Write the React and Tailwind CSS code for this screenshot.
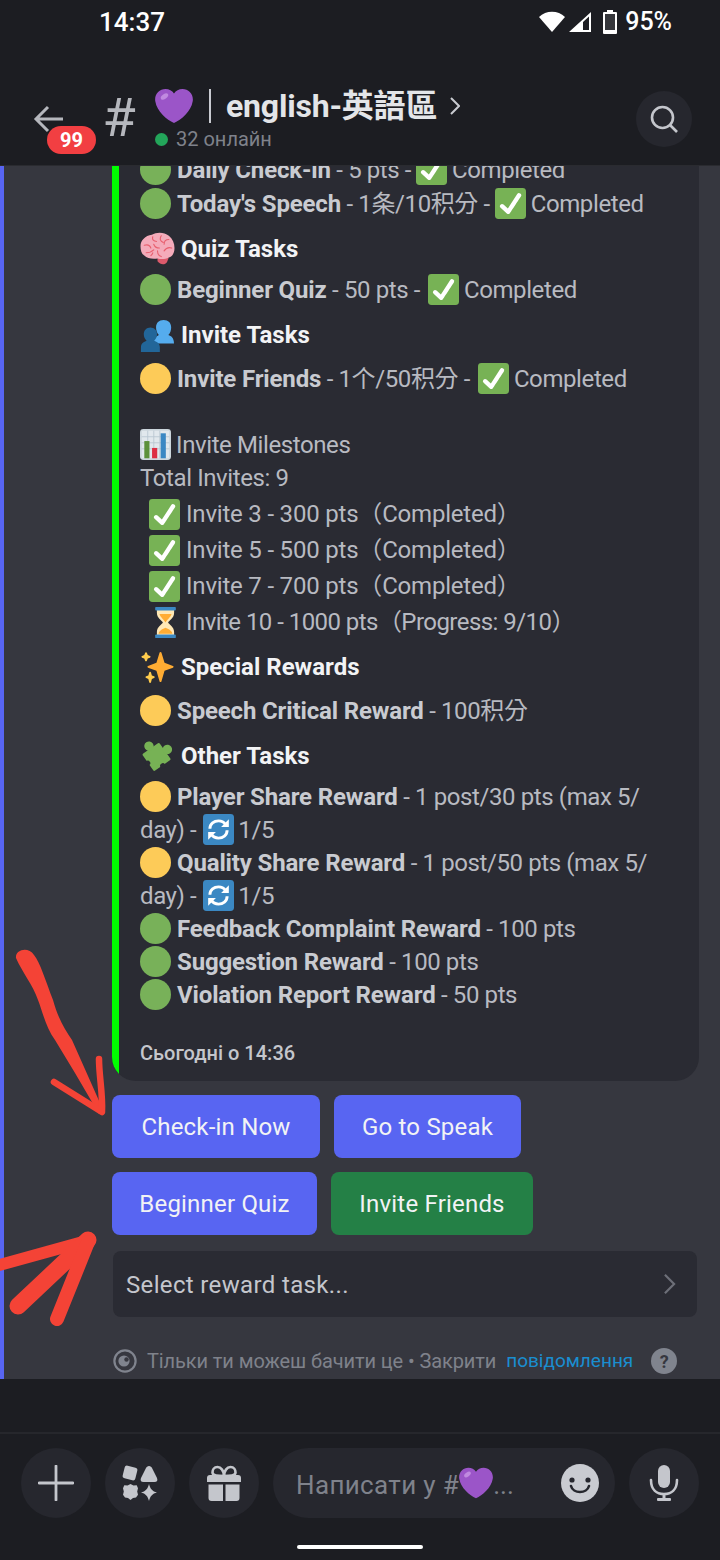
const FONT = "font-['Roboto','Noto_Sans_CJK_TC',sans-serif]";

function Circle({ color }) {
  return (
    <svg viewBox="0 0 36 36" className="h-[31px] w-[31px] shrink-0 mr-[6px]">
      <circle cx="18" cy="18" r="18" fill={color} />
    </svg>
  );
}

const GreenDot = () => <Circle color="#78b159" />;
const YellowDot = () => <Circle color="#fdcb58" />;

function Check({ className = "mx-[5px]" }) {
  return (
    <svg viewBox="0 0 36 36" className={`h-[31px] w-[31px] shrink-0 ${className}`}>
      <rect width="36" height="36" rx="4" fill="#77b255" />
      <path
        fill="#fff"
        d="M29.28 6.362a2.5 2.5 0 0 0-3.458.736L14.936 23.877l-5.029-4.65a2.5 2.5 0 0 0-3.394 3.671l7.209 6.666c.48.445 1.09.665 1.696.665.673 0 1.534-.282 2.099-1.139.332-.506 12.5-19.27 12.5-19.27a2.5 2.5 0 0 0-.737-3.458z"
      />
    </svg>
  );
}

function Heart({ className }) {
  return (
    <svg viewBox="0 0 36 36" className={className}>
      <path
        fill="#9b55c8"
        d="M35.885 11.833c0-5.45-4.418-9.868-9.867-9.868-3.308 0-6.227 1.633-8.018 4.129-1.791-2.496-4.71-4.129-8.017-4.129-5.45 0-9.868 4.417-9.868 9.868 0 .772.098 1.52.266 2.241C1.751 22.587 11.216 31.568 18 34.034c6.783-2.466 16.249-11.447 17.617-19.959.17-.721.268-1.469.268-2.242z"
      />
      <ellipse cx="9" cy="9" rx="4" ry="2.2" fill="#c08ae0" transform="rotate(-35 9 9)" />
    </svg>
  );
}

function Brain() {
  return (
    <svg viewBox="0 0 36 36" className="h-[34px] w-[35px] shrink-0 mr-[6px]">
      <path fill="#dd5a6c" d="M18 27h12l-2 5c-2 3-7 3-10-1z" />
      <path
        fill="#f4abba"
        d="M12 3c5-3 13-3 18 1 4 3 6 8 6 13 0 5-2 9-6 10-4 2-8 2-12 1-5 1-11 0-14-3-3-2-4-6-4-10 0-6 5-11 12-12z"
      />
      <path
        fill="none"
        stroke="#e8606f"
        strokeWidth="1.2"
        strokeLinecap="round"
        d="M13 5c-1 3 1 5 4 5M22 4c-2 3-1 6 2 7M30 8c-3 0-5 2-5 5M4 14c3-1 6 0 7 3M14 13c1 3 3 4 6 4M33 17c-3-1-6 0-8 3M6 22c3 0 6-1 8-3M18 20c0 3 1 5 4 6M11 25c1-1 2-2 2-3"
      />
    </svg>
  );
}

function Busts() {
  return (
    <svg viewBox="0 0 36 36" className="h-[36px] w-[34px] shrink-0 mr-[7px]">
      <path fill="#55acee" d="M14 27c0-4 2-7 6-9-2-2-3-5-3-8 0-5 3-8 8-8s8 3 8 8c0 3-1 6-3 8 3 1 6 3 6 9z" />
      <path fill="#269" d="M1 36v-5c0-4 3-6 6-7-2-2-3-4-3-7 0-4 3-7 7-7s7 3 7 7c0 3-1 5-3 7 3 1 6 3 6 7v5z" />
    </svg>
  );
}

function Chart() {
  return (
    <svg viewBox="0 0 36 36" className="h-[31px] w-[31px] shrink-0 mr-[5px]">
      <rect width="36" height="36" rx="4" fill="#ccd6dd" />
      <rect x="2" y="2" width="32" height="32" fill="#e1e8ed" />
      <path stroke="#b8c6d0" strokeWidth="1" d="M2 9h32M2 16h32M2 23h32M9 2v32M16 2v32M23 2v32" />
      <rect x="5" y="14" width="6" height="20" fill="#5c913b" />
      <rect x="14" y="22" width="6" height="12" fill="#dd2e44" />
      <rect x="24" y="5" width="6" height="29" fill="#3b88c3" />
    </svg>
  );
}

function Hourglass() {
  return (
    <svg viewBox="0 0 36 36" className="h-[31px] w-[31px] shrink-0 ml-[6px] mr-[4px]">
      <path fill="#ffe8b6" d="M8 3h20v4c0 6-6 9-7 11 1 2 7 5 7 11v4H8v-4c0-6 6-9 7-11-1-2-7-5-7-11z" />
      <path fill="#ffac33" d="M11 8h14c-1 4-6 7-7 10-1-3-6-6-7-10zM10 31c0-3 5-6 8-7 3 1 8 4 8 7z" />
      <rect x="6" y="0" width="24" height="4" rx="1" fill="#3b88c3" />
      <rect x="6" y="32" width="24" height="4" rx="1" fill="#3b88c3" />
    </svg>
  );
}

function Sparkles() {
  return (
    <svg viewBox="0 0 36 36" className="h-[34px] w-[35px] shrink-0 mr-[6px]">
      <path
        fill="#ffac33"
        d="M34.347 16.893l-8.899-3.294-3.323-10.891c-.128-.42-.517-.708-.956-.708-.439 0-.828.288-.956.708l-3.322 10.891-8.9 3.294c-.393.146-.653.519-.653.938 0 .418.26.793.653.938l8.895 3.293 3.324 11.223c.126.424.516.715.959.715.442 0 .833-.291.959-.716l3.324-11.223 8.896-3.293c.391-.144.652-.518.652-.937 0-.418-.261-.792-.653-.938z"
      />
      <path
        fill="#ffcc4d"
        d="M14.347 27.894l-2.314-.856-.9-3.3c-.118-.436-.513-.738-.964-.738-.451 0-.846.302-.965.737l-.9 3.3-2.313.856c-.393.145-.653.52-.653.938 0 .418.26.793.653.938l2.301.853.907 3.622c.112.444.511.756.97.756.459 0 .858-.312.97-.757l.907-3.622 2.301-.853c.393-.144.653-.519.653-.937 0-.418-.26-.793-.653-.937z"
      />
      <path
        fill="#ffcc4d"
        d="M10.009 6.231l-2.364-.875-.876-2.365c-.145-.393-.519-.653-.938-.653-.418 0-.792.26-.938.653l-.875 2.365-2.365.875c-.393.146-.653.52-.653.938 0 .418.26.793.653.938l2.365.875.875 2.365c.146.393.52.653.938.653.418 0 .792-.26.938-.653l.875-2.365 2.365-.875c.393-.146.653-.52.653-.938 0-.418-.26-.792-.653-.938z"
      />
    </svg>
  );
}

function Puzzle() {
  return (
    <svg viewBox="0 0 36 36" className="h-[34px] w-[35px] shrink-0 mr-[6px]">
      <g transform="rotate(-35 17 19)">
        <rect x="6" y="8" width="22" height="22" rx="1.5" fill="#77b255" />
        <circle cx="17" cy="5" r="5" fill="#77b255" />
        <circle cx="31" cy="19" r="5" fill="#77b255" />
        <circle cx="5.500" cy="19" r="2.800" fill="#2a2b33" />
        <circle cx="17" cy="30.500" r="2.800" fill="#2a2b33" />
      </g>
    </svg>
  );
}

function Refresh() {
  return (
    <svg viewBox="0 0 36 36" className="h-[31px] w-[31px] shrink-0 ml-[7px] mr-[4px]">
      <rect width="36" height="36" rx="4" fill="#3b88c3" />
      <path fill="none" stroke="#fff" strokeWidth="3.4" d="M8 17c0-6 5-9 10-9 3 0 6 1 8 4M28 19c0 6-5 9-10 9-3 0-6-1-8-4" />
      <path fill="#fff" d="M30 6v9h-9zM6 30v-9h9z" />
    </svg>
  );
}

function Bold({ children }) {
  return <span className="font-bold tracking-[-0.15px] text-[#c9cbd1] whitespace-pre">{children}</span>;
}

function Txt({ children }) {
  return <span className="whitespace-pre">{children}</span>;
}

function Row({ className = "", children }) {
  return <div className={`flex h-[33px] items-center ${className}`}>{children}</div>;
}

function Heading({ icon, className = "", children }) {
  return (
    <div className={`flex h-[33px] items-center ${className}`}>
      {icon}
      <span className="font-bold tracking-normal text-[#f2f3f5]">{children}</span>
    </div>
  );
}

function Milestone({ icon, spacing = "tracking-[-0.2px]", children }) {
  return (
    <div className="flex h-[36px] items-center pl-[4px]">
      {icon}
      <span className={`whitespace-pre pl-[1px] ${spacing}`}>{children}</span>
    </div>
  );
}

function Embed() {
  return (
    <div className="ml-[112px] mr-[21px] flex overflow-hidden rounded-[24px] bg-[#2a2b33]">
      <div className="w-[7px] shrink-0 bg-[#00ff00]" />
      <div className="flex-1 pl-[21px] pb-[12px] pt-[20px] text-[24px] tracking-[-0.4px] text-[#b8bac1]">
        <Row>
          <GreenDot />
          <Bold>Daily Check-in</Bold>
          <Txt> - 5 pts -</Txt>
          <Check />
          <Txt>Completed</Txt>
        </Row>
        <Row className="mt-[1px]">
          <GreenDot />
          <Bold>Today's Speech</Bold>
          <Txt> - 1条/10积分 -</Txt>
          <Check />
          <Txt>Completed</Txt>
        </Row>
        <Heading icon={<Brain />} className="mt-[12px]">Quiz Tasks</Heading>
        <Row className="mt-[8px]">
          <GreenDot />
          <Bold>Beginner Quiz</Bold>
          <Txt> - 50 pts -</Txt>
          <Check className="ml-[8px] mr-[5px]" />
          <Txt>Completed</Txt>
        </Row>
        <Heading icon={<Busts />} className="mt-[12px]">Invite Tasks</Heading>
        <Row className="mt-[11px]">
          <YellowDot />
          <Bold>Invite Friends</Bold>
          <Txt> - 1个/50积分 -</Txt>
          <Check className="ml-[8px] mr-[5px]" />
          <Txt>Completed</Txt>
        </Row>
        <Row className="mt-[33px]">
          <Chart />
          <Txt>Invite Milestones</Txt>
        </Row>
        <Row>
          <Txt>Total Invites: 9</Txt>
        </Row>
        <div className="mt-[2px]">
          <Milestone icon={<Check />}>Invite 3 - 300 pts（Completed）</Milestone>
          <Milestone icon={<Check />}>Invite 5 - 500 pts（Completed）</Milestone>
          <Milestone icon={<Check />}>Invite 7 - 700 pts（Completed）</Milestone>
          <Milestone icon={<Hourglass />} spacing="tracking-[-0.55px]">Invite 10 - 1000 pts（Progress: 9/10）</Milestone>
        </div>
        <Heading icon={<Sparkles />} className="mt-[10px]">Special Rewards</Heading>
        <Row className="mt-[11px]">
          <YellowDot />
          <Bold>Speech Critical Reward</Bold>
          <Txt> - 100积分</Txt>
        </Row>
        <Heading icon={<Puzzle />} className="mt-[12px]">Other Tasks</Heading>
        <Row className="mt-[8px]">
          <YellowDot />
          <Bold>Player Share Reward</Bold>
          <Txt> - 1 post/30 pts (max 5/</Txt>
        </Row>
        <Row>
          <Txt>day) -</Txt>
          <Refresh />
          <Txt>1/5</Txt>
        </Row>
        <Row>
          <YellowDot />
          <Bold>Quality Share Reward</Bold>
          <Txt> - 1 post/50 pts (max 5/</Txt>
        </Row>
        <Row>
          <Txt>day) -</Txt>
          <Refresh />
          <Txt>1/5</Txt>
        </Row>
        <Row>
          <GreenDot />
          <Bold>Feedback Complaint Reward</Bold>
          <Txt> - 100 pts</Txt>
        </Row>
        <Row>
          <GreenDot />
          <Bold>Suggestion Reward</Bold>
          <Txt> - 100 pts</Txt>
        </Row>
        <Row>
          <GreenDot />
          <Bold>Violation Report Reward</Bold>
          <Txt> - 50 pts</Txt>
        </Row>
        <div className="mt-[25px] flex h-[33px] items-center text-[20px] font-medium tracking-normal text-[#c4c6cc]">
          Сьогодні о 14:36
        </div>
      </div>
    </div>
  );
}

function ActionButton({ width, color = "bg-[#5865f2]", children }) {
  return (
    <button className={`flex h-[63px] items-center justify-center rounded-[8px] text-[24px] tracking-[0.2px] text-[#f2f3f5] ${width} ${color}`}>
      {children}
    </button>
  );
}

function Actions() {
  return (
    <div className="ml-[112px] mt-[14px]">
      <div className="flex gap-[14px]">
        <ActionButton width="w-[208px]">Check-in Now</ActionButton>
        <ActionButton width="w-[187px]">Go to Speak</ActionButton>
      </div>
      <div className="mt-[14px] flex gap-[14px]">
        <ActionButton width="w-[205px]">Beginner Quiz</ActionButton>
        <ActionButton width="w-[202px]" color="bg-[#248046]">Invite Friends</ActionButton>
      </div>
      <div className="mt-[16px] ml-[1px] mr-[23px] flex h-[66px] items-center justify-between rounded-[8px] bg-[#2a2b33] pl-[13px] pr-[21px] text-[24px] tracking-[0.35px] text-[#c4c6cc]">
        <span className="pt-[2px]">Select reward task...</span>
        <svg viewBox="0 0 14 24" className="h-[22px] w-[13px]">
          <path d="M2 2l10 10L2 22" fill="none" stroke="#6d6f78" strokeWidth="2.4" />
        </svg>
      </div>
    </div>
  );
}

function Ephemeral() {
  return (
    <div className="ml-[113px] mt-[29px] mb-[3px] flex h-[30px] items-center text-[20px] tracking-[-0.1px] text-[#7f828b]">
      <svg viewBox="0 0 24 24" className="mr-[10px] h-[24px] w-[24px]">
        <circle cx="12" cy="12" r="10.6" fill="none" stroke="#80848e" strokeWidth="2.2" />
        <circle cx="11" cy="12" r="5.6" fill="#80848e" />
        <circle cx="13.5" cy="10.5" r="2.2" fill="#36373f" />
      </svg>
      <span className="whitespace-pre">Тільки ти можеш бачити це • Закрити</span>
      <span className="ml-[10px] text-[19px] tracking-normal text-[#1a8ed0]">повідомлення</span>
      <span className="ml-[18px] flex h-[26px] w-[26px] items-center justify-center rounded-full bg-[#80848e] text-[18px] font-bold text-[#36373f]">?</span>
    </div>
  );
}

function StatusBar() {
  return (
    <div className="flex h-[44px] items-center justify-between pl-[99px] pr-[48px] text-white">
      <span className="text-[26px] font-medium">14:37</span>
      <div className="flex items-center">
        <svg viewBox="0 0 26 22" className="h-[22px] w-[26px]">
          <path d="M0 6C7-1 19-1 26 6L13 21z" fill="#fff" />
        </svg>
        <svg viewBox="0 0 22 22" className="ml-[4px] h-[22px] w-[22px]">
          <path d="M22 1v20H0z M20 5.5L14 11v8h6z" fill="#fff" fillRule="evenodd" />
        </svg>
        <svg viewBox="0 0 14 24" className="ml-[12px] h-[24px] w-[14px]">
          <path d="M4 0h6v2h3a1 1 0 0 1 1 1v20a1 1 0 0 1-1 1H1a1 1 0 0 1-1-1V3a1 1 0 0 1 1-1h3z" fill="#fff" />
          <rect x="2" y="4" width="10" height="16" fill="#35363b" />
        </svg>
        <span className="ml-[8px] text-[25px] font-medium">95%</span>
      </div>
    </div>
  );
}

function Header() {
  return (
    <div className="relative flex h-[121px] items-start pl-[33px]">
      <svg viewBox="0 0 32 30" className="mt-[60px] h-[30px] w-[32px]">
        <path d="M30 15H3M15 3L3 15l12 12" fill="none" stroke="#b5b7bd" strokeWidth="3" />
      </svg>
      <span className="absolute left-[47px] top-[82px] flex h-[28px] w-[49px] items-center justify-center rounded-full bg-[#f23f42] text-[20px] font-bold text-white">
        99
      </span>
      <span className="ml-[35px] mt-[46px] w-[38px] text-center text-[54px] leading-[56px] text-[#b5b7bd]">#</span>
      <div className="ml-[17px] mt-[42px]">
        <div className="flex h-[40px] items-center">
          <Heart className="h-[38px] w-[38px]" />
          <span className="ml-[16px] h-[34px] w-[2px] bg-[#c9cbd1]" />
          <span className="ml-[15px] text-[32px] font-bold tracking-[-0.2px] text-[#e3e5e8]">english-英語區</span>
          <svg viewBox="0 0 10 18" className="ml-[13px] h-[18px] w-[10px]">
            <path d="M1 1l8 8-8 8" fill="none" stroke="#c9cbd1" strokeWidth="2" />
          </svg>
        </div>
        <div className="-mt-[2px] flex items-center">
          <span className="h-[13px] w-[13px] rounded-full bg-[#23a55a]" />
          <span className="ml-[8px] text-[20px] text-[#7f828b]">32 онлайн</span>
        </div>
      </div>
      <div className="absolute right-[28px] top-[47px] flex h-[56px] w-[56px] items-center justify-center rounded-full bg-[#26272e]">
        <svg viewBox="0 0 30 30" className="h-[30px] w-[30px]">
          <circle cx="13.5" cy="13.5" r="10.5" fill="none" stroke="#c4c6cc" strokeWidth="2.6" />
          <path d="M21 21l7 7" stroke="#c4c6cc" strokeWidth="2.6" />
        </svg>
      </div>
    </div>
  );
}

function RoundButton({ children }) {
  return (
    <div className="flex h-[70px] w-[70px] shrink-0 items-center justify-center rounded-full bg-[#26272e]">
      {children}
    </div>
  );
}

function Composer() {
  return (
    <div className="h-[128px] border-t-2 border-[#26272c] bg-[#1c1d22]">
      <div className="flex gap-[14px] pl-[21px] pt-[14px]">
        <RoundButton>
          <svg viewBox="0 0 36 36" className="h-[36px] w-[36px]">
            <path d="M18 1v34M1 18h34" stroke="#c4c6cc" strokeWidth="2.8" strokeLinecap="round" />
          </svg>
        </RoundButton>
        <RoundButton>
          <svg viewBox="0 0 36 36" className="h-[36px] w-[36px]" fill="#c4c6cc">
            <rect x="1.5" y="1.5" width="13" height="13" rx="2.5" transform="rotate(14 8 8)" />
            <path d="M27 1c1.500 0 2.500 1 3 2l5 10c1 2.500 0 4-2.500 4H21.500c-2.500 0-3.500-1.500-2.500-4l5-10c.500-1 1.500-2 3-2z" />
            <path d="M8.500 19l3 1.500 3.200-.2 1.300 3-.8 3.200.8 3.200-2 2.800-3 .6-2.500 1.900-2.500-1.900-3-.6-2-2.800.8-3.200-.8-3.200 1.300-3 3.200.2z" />
            <path d="M27 19c1 4.500 3.500 7.500 8 8.500-4.500 1-7 4-8 8.500-1-4.500-3.500-7.500-8-8.500 4.500-1 7-4 8-8.500z" />
          </svg>
        </RoundButton>
        <RoundButton>
          <svg viewBox="0 0 36 36" className="h-[36px] w-[36px]" fill="#c4c6cc">
            <path d="M1 13a3 3 0 0 1 3-3h28a3 3 0 0 1 3 3v4H1z" />
            <path d="M2.500 19.500H17V36H5.500a3 3 0 0 1-3-3zM19.500 19.500H33.500V33a3 3 0 0 1-3 3h-11z" />
            <path d="M18 11c0-5-3-9-6.500-9S6.500 5 6.500 7.500 9 11 18 11zm0 0c0-5 3-9 6.500-9s5 3 5 5.500S27 11 18 11z" fill="none" stroke="#c4c6cc" strokeWidth="2.6" />
          </svg>
        </RoundButton>
        <div className="flex h-[70px] w-[342px] items-center rounded-full bg-[#26272e] pl-[23px] pr-[16px]">
          <span className="pt-[5px] text-[26px] tracking-[0.35px] text-[#7f828b]">Написати у #</span>
          <Heart className="h-[34px] w-[34px]" />
          <span className="pt-[5px] text-[26px] text-[#7f828b]">...</span>
          <svg viewBox="0 0 38 38" className="ml-auto h-[38px] w-[38px]">
            <circle cx="19" cy="19" r="19" fill="#c9cbd1" />
            <circle cx="11" cy="16" r="2.6" fill="#26272e" />
            <circle cx="27" cy="16" r="2.6" fill="#26272e" />
            <path d="M10 22c2 8 16 8 18 0" fill="none" stroke="#26272e" strokeWidth="2.6" strokeLinecap="round" />
          </svg>
        </div>
        <RoundButton>
          <svg viewBox="0 0 30 36" className="h-[36px] w-[30px]" fill="#c4c6cc">
            <rect x="9" y="0" width="12" height="23" rx="6" />
            <path d="M2 15c0 10 6 14 13 14s13-4 13-14" fill="none" stroke="#c4c6cc" strokeWidth="2.6" strokeLinecap="round" />
            <rect x="13.5" y="28" width="3" height="6" />
            <rect x="8" y="33" width="14" height="3" rx="1" />
          </svg>
        </RoundButton>
      </div>
      <div className="mx-auto mt-[27px] h-[4px] w-[126px] rounded-full bg-white" />
    </div>
  );
}

function RedArrows() {
  return (
    <svg viewBox="0 0 720 1560" className="pointer-events-none absolute left-0 top-0 h-[1560px] w-[720px]">
      <path
        fill="#f44336"
        d="M16 958C15 950 28 946 34 955C40 962 46 982 53 1000C58 1018 64 1028 72 1040L104 1112L99 1114L75 1073L55 1040C46 1028 42 1010 38 1000C33 985 22 972 16 958z"
      />
      <g fill="none" stroke="#f44336" strokeLinecap="round" strokeLinejoin="round">
        <path d="M54 1082l48 30c1-18-3-36-3-53" strokeWidth="6.500" />
        <path d="M-4 1266l94-26" strokeWidth="12" />
        <path d="M18 1306l70-66" strokeWidth="17" />
        <path d="M57 1319l31-77" strokeWidth="14" />
      </g>
    </svg>
  );
}

export default function App() {
  return (
    <div className={`relative flex h-[1560px] w-[720px] flex-col overflow-hidden bg-[#1c1d22] ${FONT}`}>
      <div className="z-10 h-[166px] shrink-0 border-b border-[#2a2b30] bg-[#1c1d22]">
        <StatusBar />
        <Header />
      </div>
      <div className="flex h-[1213px] shrink-0 flex-col justify-end overflow-hidden border-l-4 border-[#5865f2] bg-[#36373f]">
        <div className="-ml-[4px] shrink-0">
          <Embed />
          <Actions />
          <Ephemeral />
        </div>
      </div>
      <div className="h-[53px] shrink-0" />
      <Composer />
      <RedArrows />
    </div>
  );
}
